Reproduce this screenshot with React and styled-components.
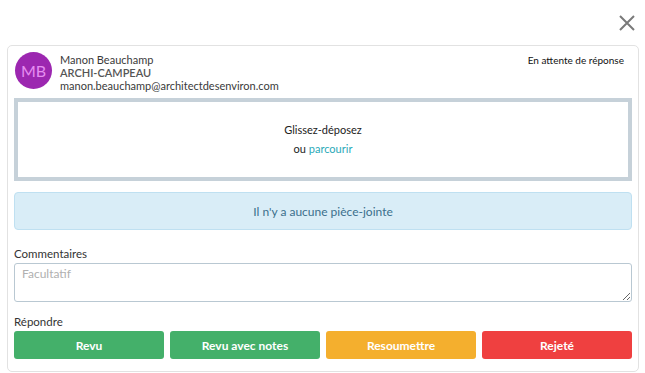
import React from "react";
import styled, { createGlobalStyle } from "styled-components";

const Global = createGlobalStyle`
  html, body { margin: 0; padding: 0; background: #fff; }
  body { font-family: Lato, "Open Sans", Arial, sans-serif; color: #333; }
  * { box-sizing: border-box; }
`;

const Page = styled.div`
  width: 645px;
  height: 373px;
  overflow: hidden;
  display: flex;
  flex-direction: column;
`;

const TopBar = styled.div`
  height: 45px;
  display: flex;
  justify-content: flex-end;
  align-items: center;
  padding-right: 9px;
`;

const CloseButton = styled.button`
  border: 0;
  background: none;
  padding: 0;
  width: 18px;
  height: 18px;
  display: flex;
  cursor: pointer;
`;

const Card = styled.div`
  margin: 0 6px 0 7px;
  border: 1px solid #e2e2e2;
  border-radius: 5px;
  padding: 6px 6px 12px 6px;
  display: flex;
  flex-direction: column;
`;

const Header = styled.div`
  display: flex;
  align-items: flex-start;
  gap: 8px;
  padding-left: 1px;
`;

const Avatar = styled.div`
  width: 37px;
  height: 37px;
  border-radius: 50%;
  background: #9c27b0;
  color: #e58ef0;
  font-size: 16px;
  display: flex;
  align-items: center;
  justify-content: center;
  flex-shrink: 0;
`;

const Info = styled.div`
  flex: 1;
  display: flex;
  flex-direction: column;
  font-size: 11px;
  line-height: 13px;
  color: #3a3a3a;
  padding-top: 1px;
`;

const Company = styled.span`
  font-weight: 600;
  color: #555;
`;

const Status = styled.div`
  font-size: 10px;
  color: #111;
  padding: 2px 8px 0 0;
  line-height: 12px;
`;

const DropZone = styled.div`
  margin-top: 6px;
  height: 83px;
  border: 4px solid #c6d1d9;
  display: flex;
  flex-direction: column;
  align-items: center;
  justify-content: center;
  font-size: 11px;
  line-height: 19px;
  color: #222;
  padding-bottom: 1px;
`;

const Link = styled.a`
  color: #2aa9b8;
  text-decoration: none;
`;

const Alert = styled.div`
  margin-top: 11px;
  height: 38px;
  background: #d9edf7;
  border: 1px solid #bfe0f1;
  border-radius: 4px;
  color: #3b6f8c;
  font-size: 12px;
  display: flex;
  align-items: center;
  justify-content: center;
`;

const Label = styled.div`
  margin-top: ${(p) => p.$mt}px;
  margin-bottom: 1px;
  font-size: 11.5px;
  line-height: 16px;
  color: #333;
`;

const TextArea = styled.textarea`
  display: block;
  width: 100%;
  height: 39px;
  border: 1px solid #b9c8d2;
  border-radius: 3px;
  padding: 2px 7px;
  font-family: Lato, Arial, sans-serif;
  font-size: 12px;
  color: #333;
  resize: vertical;
  &::placeholder { color: #b0b0b0; }
`;

const Buttons = styled.div`
  display: grid;
  grid-template-columns: repeat(4, 1fr);
  gap: 6px;
`;

const Button = styled.button`
  height: 28px;
  border: 0;
  border-radius: 3px;
  background: ${(p) => p.$bg};
  color: #fff;
  font-family: Lato, Arial, sans-serif;
  font-weight: 700;
  font-size: 12px;
  cursor: pointer;
`;

export default function App() {
  return (
    <Page>
      <Global />
      <TopBar>
        <CloseButton aria-label="Fermer">
          <svg width="18" height="18" viewBox="0 0 18 18">
            <path d="M2 2 L16 16 M16 2 L2 16" stroke="#7a7a7a" strokeWidth="2" fill="none" />
          </svg>
        </CloseButton>
      </TopBar>
      <Card>
        <Header>
          <Avatar>MB</Avatar>
          <Info>
            <span>Manon Beauchamp</span>
            <Company>ARCHI-CAMPEAU</Company>
            <span>manon.beauchamp@architectdesenviron.com</span>
          </Info>
          <Status>En attente de réponse</Status>
        </Header>
        <DropZone>
          <span>Glissez-déposez</span>
          <span>
            ou <Link href="#">parcourir</Link>
          </span>
        </DropZone>
        <Alert>Il n'y a aucune pièce-jointe</Alert>
        <Label $mt={16}>Commentaires</Label>
        <TextArea placeholder="Facultatif" />
        <Label $mt={12}>Répondre</Label>
        <Buttons>
          <Button $bg="#44b06a">Revu</Button>
          <Button $bg="#44b06a">Revu avec notes</Button>
          <Button $bg="#f4af2e">Resoumettre</Button>
          <Button $bg="#ef4040">Rejeté</Button>
        </Buttons>
      </Card>
    </Page>
  );
}
